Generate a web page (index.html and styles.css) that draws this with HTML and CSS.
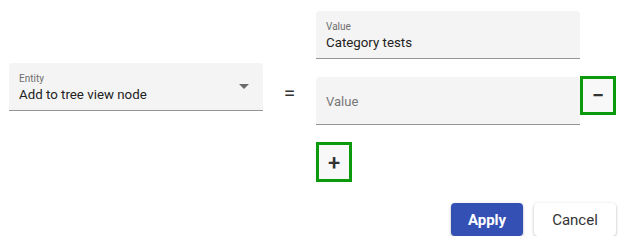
FILE: index.html
```html
<!DOCTYPE html>
<html>
<head>
	<meta charset="utf-8">
	<title>Rule editor</title>
	<link rel="stylesheet" href="styles.css">
</head>
<body>
	<div class="rule">
		<div class="field entity">
			<span class="field-label">Entity</span>
			<span class="field-value">Add to tree view node</span>
			<span class="arrow"></span>
		</div>
		<div class="equals">=</div>
		<div class="values">
			<div class="value-row">
				<div class="field value">
					<span class="field-label">Value</span>
					<span class="field-value">Category tests</span>
				</div>
			</div>
			<div class="value-row">
				<div class="field value empty">
					<span class="placeholder">Value</span>
				</div>
				<button class="icon-btn minus">&minus;</button>
			</div>
			<button class="icon-btn plus">+</button>
		</div>
	</div>
	<div class="actions">
		<button class="btn apply">Apply</button>
		<button class="btn cancel">Cancel</button>
	</div>
</body>
</html>
```

FILE: styles.css
```css
body {
	margin: 0;
	font-family: Roboto, "Liberation Sans", sans-serif;
	color: #212121;
	background: #fff;
}

.rule {
	display: flex;
	align-items: flex-start;
	padding: 11px 17px 0 9px;
}

.field {
	position: relative;
	box-sizing: border-box;
	height: 48px;
	background-color: #f4f4f4;
	border-bottom: 1px solid #949494;
	border-radius: 4px 4px 0 0;
	padding: 10px 10px 0 10px;
}

.entity {
	width: 254px;
	margin-top: 52px;
}

.field-label {
	display: block;
	font-size: 10px;
	color: #6e6e6e;
	line-height: 12px;
}

.field-value {
	display: block;
	font-size: 13.3px;
	line-height: 20px;
	color: #222;
}

.arrow {
	position: absolute;
	right: 14px;
	top: 21px;
	border-left: 5px solid transparent;
	border-right: 5px solid transparent;
	border-top: 5px solid #6a6a6a;
}

.equals {
	width: 53px;
	text-align: center;
	font-size: 21px;
	line-height: 24px;
	margin-top: 70px;
	color: #333;
}

.values {
	display: flex;
	flex-direction: column;
	align-items: flex-start;
	gap: 18px;
}

.value-row {
	display: flex;
	align-items: flex-start;
}

.value {
	width: 264px;
}

.empty {
	display: flex;
	align-items: center;
	padding-top: 2px;
}

.placeholder {
	font-size: 13px;
	color: #777;
}

.icon-btn {
	box-sizing: border-box;
	width: 36px;
	height: 39px;
	border: 3px solid #0b9a0b;
	background-color: #f8f8f8;
	font-family: Roboto, "Liberation Sans", sans-serif;
	font-size: 22px;
	font-weight: 500;
	color: #333;
	padding: 0;
	cursor: pointer;
}

.minus {
	margin-top: -1px;
}

.plus {
	height: 40px;
	margin-top: -1px;
}

.actions {
	display: flex;
	justify-content: flex-end;
	gap: 11px;
	padding: 21px 17px 0 0;
}

.btn {
	height: 33px;
	border: none;
	border-radius: 4px;
	font-family: Roboto, "Liberation Sans", sans-serif;
	font-size: 15px;
	cursor: pointer;
	box-shadow: 0 1px 3px rgba(0, 0, 0, 0.3);
}

.apply {
	width: 72px;
	background-color: #3550b5;
	color: #fff;
	font-weight: 700;
}

.cancel {
	width: 82px;
	background-color: #fff;
	color: #333;
}
```
